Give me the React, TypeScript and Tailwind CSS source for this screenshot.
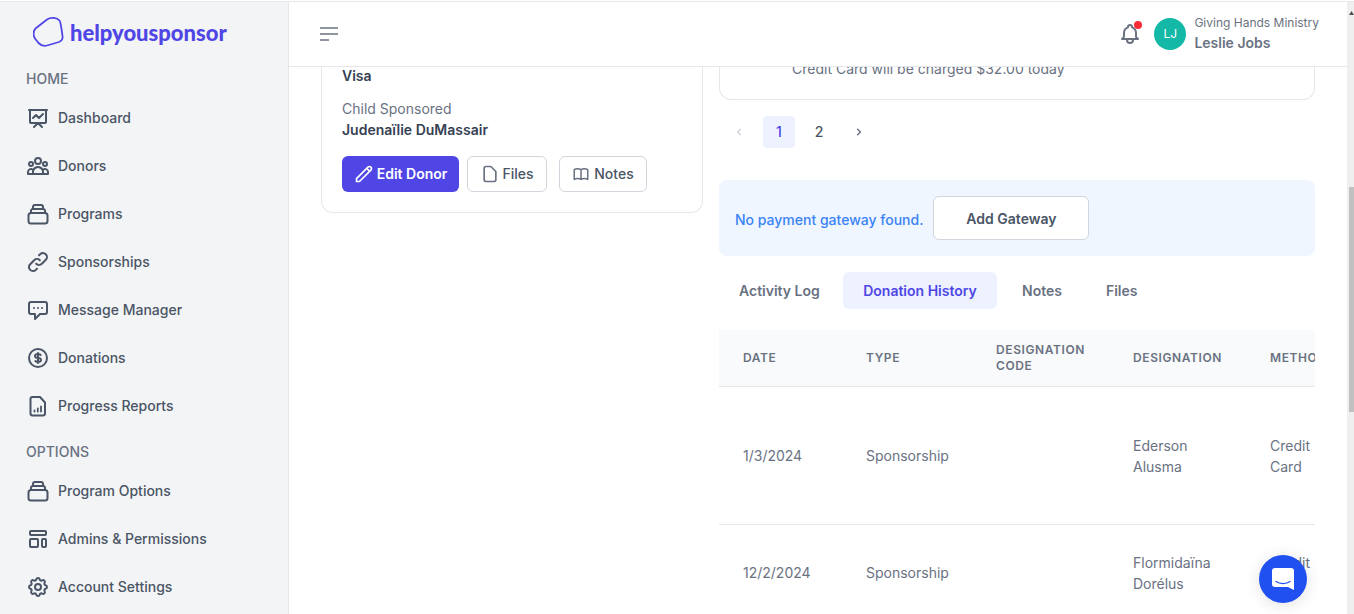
import React from "react";
import {
  HiOutlinePresentationChartLine,
  HiOutlineUserGroup,
  HiOutlineLink,
  HiOutlineChatAlt,
  HiOutlineCurrencyDollar,
  HiOutlineTemplate,
  HiOutlineCog,
  HiOutlineBell,
  HiOutlinePencil,
  HiOutlineDocument,
  HiOutlineBookOpen,
  HiChevronLeft,
  HiChevronRight,
} from "react-icons/hi";

const inter = { fontFamily: "Inter, 'Liberation Sans', sans-serif" };

function ProgramsIcon() {
  return (
    <svg width="24" height="24" viewBox="0 0 24 24" fill="none" stroke="currentColor" strokeWidth="2" strokeLinecap="round" strokeLinejoin="round">
      <rect x="2.500" y="11" width="19" height="10.500" rx="2.500" />
      <path d="M5 11V8.500A2 2 0 0 1 6.500 7h11A2 2 0 0 1 19 8.500V11" />
      <path d="M7 7V5a2 2 0 0 1 2-2h6a2 2 0 0 1 2 2v2" />
    </svg>
  );
}

function ReportIcon() {
  return (
    <svg width="24" height="24" viewBox="0 0 24 24" fill="none" stroke="currentColor" strokeWidth="2" strokeLinecap="round" strokeLinejoin="round">
      <path d="M6.500 3H14l5 5.500V19.500a2 2 0 0 1-2 2H6.500a2 2 0 0 1-2-2V5a2 2 0 0 1 2-2Z" />
      <path d="M8.500 17.500v-1M11.800 17.500v-3M15 17.500v-5" strokeWidth="1.800" />
    </svg>
  );
}

function NavItem({ icon, label }: { icon: React.ReactNode; label: string }) {
  return (
    <div className="flex h-12 items-center gap-2 text-sm font-medium text-gray-600">
      <span className="flex h-6 w-6 items-center justify-center text-gray-600">{icon}</span>
      <span>{label}</span>
    </div>
  );
}

function Sidebar() {
  return (
    <aside className="w-[289px] shrink-0 border-r border-gray-200 bg-[#f3f4f6] pl-[26px]">
      <div className="mt-[15px] flex h-[30px] items-center pl-[7px]">
        <svg width="32" height="30" viewBox="0 0 32 30" fill="none" className="shrink-0">
          <path
            d="M2.500 11.500 14 2.500C18 0 24 .5 26.500 3.500 28 5.500 29 16 29.500 19 30 22 28.500 24 26 25L14 28.500C10.500 29.500 8 28.500 5.500 26L2 21.500C0 18 .5 14 2.500 11.500Z"
            stroke="#4f46e5"
            strokeWidth="1.800"
          />
        </svg>
        <span
          className="ml-[5px] pt-[2px] text-[22px] font-black leading-none text-[#4f46e5]"
          style={{ fontFamily: "Lato, sans-serif" }}
        >
          helpyousponsor
        </span>
      </div>
      <div className="mt-[22px] h-5 text-sm font-medium leading-5 text-gray-500">HOME</div>
      <div className="mt-[5px]">
        <NavItem icon={<HiOutlinePresentationChartLine size={24} />} label="Dashboard" />
        <NavItem icon={<HiOutlineUserGroup size={24} />} label="Donors" />
        <NavItem icon={<ProgramsIcon />} label="Programs" />
        <NavItem icon={<HiOutlineLink size={24} />} label="Sponsorships" />
        <NavItem icon={<HiOutlineChatAlt size={24} />} label="Message Manager" />
        <NavItem icon={<HiOutlineCurrencyDollar size={24} />} label="Donations" />
        <NavItem icon={<ReportIcon />} label="Progress Reports" />
      </div>
      <div className="mt-[12px] h-5 text-sm font-medium leading-5 text-gray-500">OPTIONS</div>
      <div className="mt-[5px]">
        <NavItem icon={<ProgramsIcon />} label="Program Options" />
        <NavItem icon={<HiOutlineTemplate size={24} />} label="Admins & Permissions" />
        <NavItem icon={<HiOutlineCog size={24} />} label="Account Settings" />
      </div>
    </aside>
  );
}

function Header() {
  return (
    <header className="flex h-[65px] shrink-0 items-center justify-between border-b border-gray-200 bg-white pr-[28px] pl-[31px]">
      <svg width="18" height="14" viewBox="0 0 18 14" stroke="#6b7280" strokeWidth="1.600">
        <path d="M0 1h18M0 7h18M0 13h9" />
      </svg>
      <div className="flex items-center">
        <div className="relative mr-[12px] text-gray-500">
          <HiOutlineBell size={24} />
          <span className="absolute top-[-1px] right-[0px] h-2 w-2 rounded-full bg-red-500" />
        </div>
        <div className="flex h-8 w-8 items-center justify-center rounded-full bg-[#14b8a6] text-xs text-white">LJ</div>
        <div className="ml-2 flex flex-col">
          <span className="text-xs leading-[16px] text-gray-500">Giving Hands Ministry</span>
          <span className="mt-[2px] text-sm font-semibold leading-[20px] text-gray-500">Leslie Jobs</span>
        </div>
      </div>
    </header>
  );
}

function LeftCard() {
  return (
    <div className="w-[382px] shrink-0">
      <div className="box-content h-[145px] rounded-b-xl border border-t-0 border-gray-200 px-5">
        <div className="text-sm font-semibold leading-[18px] text-gray-700">Visa</div>
        <div className="mt-[14px] text-sm leading-5 text-gray-500">Child Sponsored</div>
        <div className="mt-[1px] text-sm font-semibold leading-5 text-gray-700">Judenaïlie DuMassair</div>
        <div className="mt-[16px] flex">
          <button className="flex h-9 w-[117px] items-center justify-center gap-[3px] rounded-md bg-[#4f46e5] text-sm font-semibold text-white">
            <HiOutlinePencil size={20} />
            Edit Donor
          </button>
          <button className="ml-2 flex h-9 w-[80px] items-center justify-center gap-[2px] rounded-md border border-gray-300 bg-white text-sm font-medium text-gray-600">
            <HiOutlineDocument size={20} className="text-gray-500" />
            Files
          </button>
          <button className="ml-3 flex h-9 w-[88px] items-center justify-center gap-[4px] rounded-md border border-gray-300 bg-white text-sm font-medium text-gray-600">
            <HiOutlineBookOpen size={18} className="text-gray-500" />
            Notes
          </button>
        </div>
      </div>
    </div>
  );
}

const columns = "grid grid-cols-[123px_130px_137px_137px_200px] pl-6";

function DataRow({ date, first, last, line }: { date: string; first: string; last: string; line: string }) {
  return (
    <div className={`${columns} items-center text-sm leading-[21px] text-gray-500 ${line}`}>
      <div>{date}</div>
      <div>Sponsorship</div>
      <div />
      <div>
        {first}
        <br />
        {last}
      </div>
      <div>
        Credit
        <br />
        Card
      </div>
    </div>
  );
}

function RightColumn() {
  return (
    <div className="w-[596px] shrink-0">
      <div className="h-[33px] overflow-hidden rounded-b-xl border border-t-0 border-gray-200 pl-[72px]">
        <div className="-mt-2 text-sm leading-5 text-gray-500">Credit Card will be charged $32.00 today</div>
      </div>
      <div className="mt-4 flex h-8 items-center text-sm font-medium">
        <span className="flex w-11 justify-center pr-1 text-gray-300">
          <HiChevronLeft size={14} />
        </span>
        <span className="flex h-8 w-8 items-center justify-center rounded bg-[#eef2ff] text-[#4f46e5]">1</span>
        <span className="flex h-8 w-12 items-center justify-center text-gray-600">2</span>
        <span className="flex w-8 justify-center text-gray-500">
          <HiChevronRight size={14} />
        </span>
      </div>
      <div className="mt-8 flex h-[76px] items-center gap-[10px] rounded-lg bg-[#eff6ff] pl-4">
        <span className="pt-[3px] text-sm font-medium text-[#3b82f6]">No payment gateway found.</span>
        <button className="h-11 w-[156px] rounded-md border border-gray-300 bg-white pt-[2px] text-sm font-semibold text-gray-600">
          Add Gateway
        </button>
      </div>
      <div className="mt-4 flex h-[37px] items-center text-sm font-semibold text-gray-500">
        <span className="w-[124px] pl-5">Activity Log</span>
        <span className="flex h-[37px] w-[154px] items-center justify-center rounded-md bg-[#eef2ff] text-[#4f46e5]">
          Donation History
        </span>
        <span className="ml-[25px]">Notes</span>
        <span className="ml-[44px]">Files</span>
      </div>
      <div className="mt-[21px] overflow-hidden">
        <div className={`${columns} h-[57px] items-center whitespace-nowrap border-b border-gray-200 bg-gray-50 text-xs font-semibold uppercase leading-4 tracking-[0.6px] text-gray-500`}>
          <div>Date</div>
          <div>Type</div>
          <div>
            Designation
            <br />
            Code
          </div>
          <div>Designation</div>
          <div>Method</div>
        </div>
        <DataRow date="1/3/2024" first="Ederson" last="Alusma" line="h-[138px] border-b border-gray-200" />
        <DataRow date="12/2/2024" first="Flormidaïna" last="Dorélus" line="h-[95px]" />
      </div>
    </div>
  );
}

function Scrollbar() {
  return (
    <div className="w-[7px] shrink-0 bg-[#efefef] pl-[2px]">
      <svg width="5" height="4" viewBox="0 0 5 4" className="mt-[9px]" fill="#505050">
        <path d="M2.500 0 5 4H0Z" />
      </svg>
      <div className="mt-[172px] h-[225px] bg-[#c1c1c1]" />
    </div>
  );
}

export default function App() {
  return (
    <div className="relative flex h-[614px] w-[1354px] flex-col overflow-hidden bg-white" style={inter}>
      <div className="h-[2px] shrink-0 border-b border-gray-200" />
      <div className="flex min-h-0 flex-1">
        <Sidebar />
        <main className="flex min-w-0 flex-1 flex-col overflow-hidden">
          <Header />
          <div className="flex gap-4 pl-[32px]">
            <LeftCard />
            <RightColumn />
          </div>
        </main>
        <Scrollbar />
      </div>
      <button className="absolute top-[555px] left-[1259px] flex h-12 w-12 items-center justify-center rounded-full bg-[#2150f0] shadow-[0_2px_16px_rgba(0,0,0,0.12)]">
        <svg width="22" height="22" viewBox="0 0 22 22">
          <path d="M3 0h16a3 3 0 0 1 3 3v19l-6-3H3a3 3 0 0 1-3-3V3a3 3 0 0 1 3-3Z" fill="#fff" />
          <path d="M4 13.500c4 2.700 10 2.700 14 0" stroke="#2150f0" strokeWidth="1.300" fill="none" strokeLinecap="round" />
        </svg>
      </button>
    </div>
  );
}
